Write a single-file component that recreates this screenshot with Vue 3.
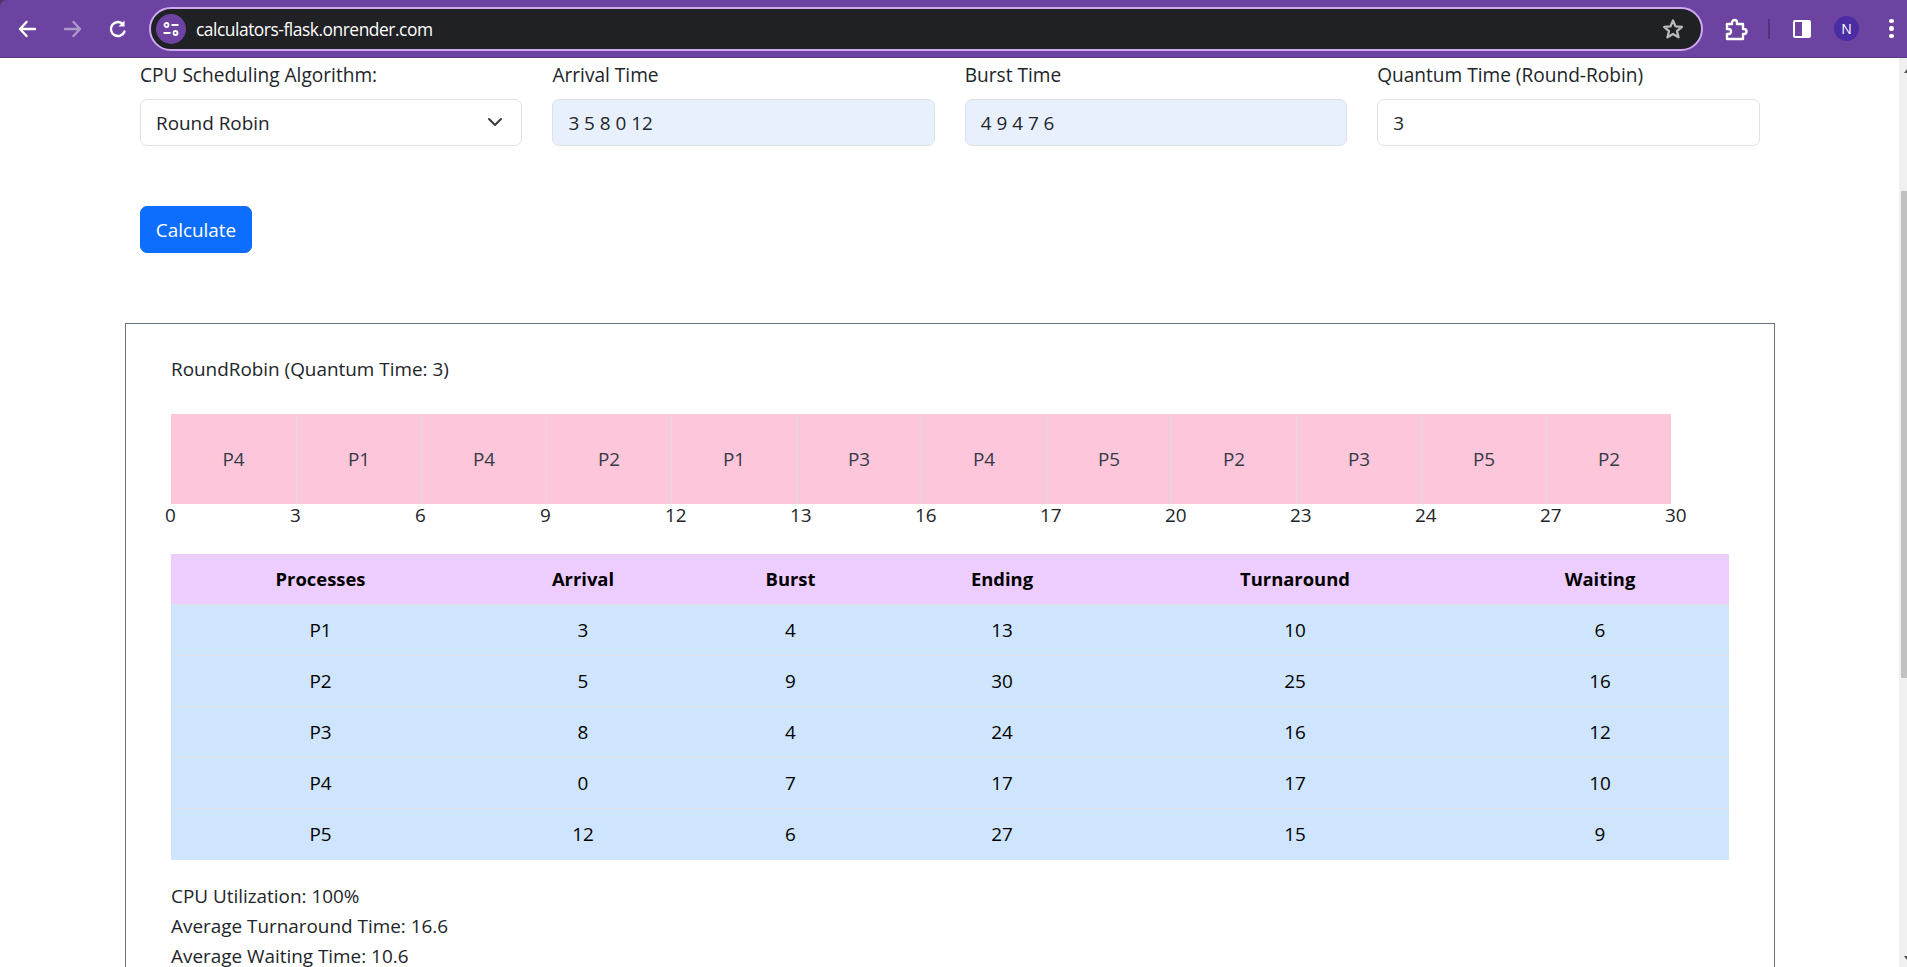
<template>
  <div class="window">
    <header class="toolbar">
      <button class="tool">
        <svg width="24" height="24" viewBox="0 0 24 24"><path d="M19 12H4M10.500 5 4 12l6.500 7" class="ico-line" /></svg>
      </button>
      <button class="tool dim">
        <svg width="24" height="24" viewBox="0 0 24 24"><path d="M4 12h15M12.500 5 19 12l-6.500 7" class="ico-line" /></svg>
      </button>
      <button class="tool">
        <svg width="24" height="24" viewBox="0 0 24 24"><path d="M18.500 14.500A7 7 0 1 1 17 7.200" class="ico-line" /><path d="M18.500 3.500v6h-6z" fill="#fff" /></svg>
      </button>
      <div class="omnibox">
        <span class="site-chip">
          <svg width="20" height="20" viewBox="0 0 20 20" fill="none" stroke="#fff" stroke-width="1.800"><circle cx="5.500" cy="6" r="2" /><path d="M10.500 6h7M2.500 14h7" /><circle cx="14.500" cy="14" r="2" /></svg>
        </span>
        <span class="url">calculators-flask.onrender.com</span>
        <svg class="star" width="24" height="24" viewBox="0 0 24 24"><path d="m12 3.500 2.500 5.900 6.400.5-4.900 4.200 1.500 6.200-5.500-3.300-5.500 3.300 1.500-6.200-4.900-4.200 6.400-.5z" fill="none" stroke="#b9bbbb" stroke-width="2.300" stroke-linejoin="round" /></svg>
      </div>
      <button class="tool puzzle">
        <svg width="26" height="26" viewBox="0 0 26 26"><path d="M5 8h5V6.500a2.500 2.500 0 0 1 5 0V8h6v5h1a2.500 2.500 0 0 1 0 5h-1v5H5v-5h1.500a2.500 2.500 0 0 0 0-5H5z" fill="none" stroke="#fff" stroke-width="2.400" stroke-linejoin="round" /></svg>
      </button>
      <span class="divider"></span>
      <span class="panel-icon"><span></span></span>
      <span class="avatar">N</span>
      <span class="dots"><i></i><i></i><i></i></span>
    </header>

    <div class="viewport">
      <main class="page">
        <form class="calc-form" @submit.prevent>
          <div class="fields">
            <div v-for="f in fields" :key="f.label" class="field">
              <label class="lbl">{{ f.label }}</label>
              <div class="control" :class="{ filled: f.filled, select: f.select }">
                <span>{{ f.value }}</span>
                <svg v-if="f.select" width="16" height="16" viewBox="0 0 16 16" fill="none" stroke="#343a40" stroke-width="2" stroke-linecap="round" stroke-linejoin="round"><path d="m2 5 6 6 6-6" /></svg>
              </div>
            </div>
          </div>
          <button class="calc-btn">Calculate</button>
        </form>

        <section class="result">
          <p class="result-title">RoundRobin (Quantum Time: 3)</p>

          <div class="gantt">
            <div v-for="(p, i) in gantt" :key="i" class="slice">{{ p }}</div>
          </div>
          <div class="ticks">
            <span v-for="t in ticks" :key="t" class="tick">{{ t }}</span>
          </div>

          <table class="stats">
            <thead>
              <tr>
                <th v-for="h in headers" :key="h">{{ h }}</th>
              </tr>
            </thead>
            <tbody>
              <tr v-for="r in rows" :key="r[0]">
                <td v-for="(c, i) in r" :key="i">{{ c }}</td>
              </tr>
            </tbody>
          </table>

          <div class="summary">
            <div>CPU Utilization: 100%</div>
            <div>Average Turnaround Time: 16.6</div>
            <div>Average Waiting Time: 10.6</div>
          </div>
        </section>
      </main>

      <div class="scrollbar">
        <span class="arrow up"></span>
        <span class="thumb"></span>
        <span class="arrow down"></span>
      </div>
    </div>
  </div>
</template>

<script setup>
const fields = [
  { label: 'CPU Scheduling Algorithm:', value: 'Round Robin', select: true },
  { label: 'Arrival Time', value: '3 5 8 0 12', filled: true },
  { label: 'Burst Time', value: '4 9 4 7 6', filled: true },
  { label: 'Quantum Time (Round-Robin)', value: '3' },
]

const gantt = ['P4', 'P1', 'P4', 'P2', 'P1', 'P3', 'P4', 'P5', 'P2', 'P3', 'P5', 'P2']
const ticks = [0, 3, 6, 9, 12, 13, 16, 17, 20, 23, 24, 27, 30]

const headers = ['Processes', 'Arrival', 'Burst', 'Ending', 'Turnaround', 'Waiting']
const rows = [
  ['P1', 3, 4, 13, 10, 6],
  ['P2', 5, 9, 30, 25, 16],
  ['P3', 8, 4, 24, 16, 12],
  ['P4', 0, 7, 17, 17, 10],
  ['P5', 12, 6, 27, 15, 9],
]
</script>

<style>
html, body { margin: 0; height: 100%; overflow: hidden; background: #fff; }
</style>

<style scoped>
.window {
  width: 1907px; height: 967px;
  display: flex; flex-direction: column;
  background: #4b3a63;
  font-family: "Open Sans", "Noto Sans", sans-serif;
  font-size: 18.9px; line-height: 30px; color: #212529;
  overflow: hidden;
}

/* Browser chrome */
.toolbar {
  height: 57px; flex-shrink: 0;
  background: #6c43a0; border-bottom: 1px solid #5c3a8a;
  border-top-left-radius: 7px;
  display: flex; align-items: center;
  padding-left: 10px; padding-right: 0;
  color: #fff;
}
.tool {
  width: 36px; height: 36px; margin-right: 9px;
  background: none; border: none; padding: 0;
  display: flex; align-items: center; justify-content: center;
}
.tool.dim { opacity: 0.45; }
.ico-line { fill: none; stroke: #fff; stroke-width: 2.400; stroke-linecap: round; stroke-linejoin: round; }

.omnibox {
  width: 1554px; height: 44px; box-sizing: border-box;
  margin-left: 4px;
  background: #202124; border: 2px solid #cfa9f2; border-radius: 22px;
  display: flex; align-items: center;
  padding: 0 16px 0 5px;
}
.site-chip {
  width: 30px; height: 30px; border-radius: 50%;
  background: #6c43a0;
  display: flex; align-items: center; justify-content: center;
  flex-shrink: 0;
}
.url {
  margin-left: 10px; flex: 1;
  color: #fff; font-size: 17.400px; letter-spacing: -0.47px;
}
.puzzle { margin: 0 0 0 14px; }
.divider { width: 2px; height: 20px; background: #54317f; margin-left: 15px; }
.panel-icon {
  width: 18px; height: 18px; margin-left: 23px; box-sizing: border-box;
  border: 2px solid #fff; border-radius: 2px;
  display: flex; justify-content: flex-end;
}
.panel-icon span { width: 7px; background: #fff; }
.avatar {
  width: 25px; height: 25px; margin-left: 23px;
  border-radius: 50%; background: #4a2ca5;
  color: #fff; font-size: 14px; line-height: 25px; text-align: center;
}
.dots { margin-left: 30px; display: flex; flex-direction: column; gap: 3px; }
.dots i { width: 4.500px; height: 4.500px; border-radius: 50%; background: #fff; }

/* Page */
.viewport { flex: 1; display: flex; min-height: 0; background: #fff; }
.page { flex: 1; min-width: 0; padding-top: 2px; overflow: hidden; }

.calc-form { padding: 0 139.500px 0 140px; }
.fields { display: grid; grid-template-columns: repeat(4, 1fr); column-gap: 30px; }
.field { display: flex; flex-direction: column; gap: 9px; }
.lbl { display: block; font-size: 19.100px; }
.control {
  height: 47px; box-sizing: border-box;
  padding: 1px 15px 0; border: 1px solid #dee2e6; border-radius: 7px;
  display: flex; align-items: center; justify-content: space-between;
  background: #fff;
}
.control.select { padding-right: 18px; }
.control.select svg { margin-top: -2px; }
.control.filled { background: #e8f0fe; }
.calc-btn {
  display: block; margin-top: 60px;
  width: 112px; height: 47px; padding: 0;
  background: #0d6efd; border: 1px solid #0d6efd; border-radius: 7px;
  color: #fff; font: inherit;
}

.result {
  margin: 70px 0 0 125px; width: 1650px; box-sizing: border-box;
  border: 1px solid #6c757d;
  padding: 30px 45px 40px;
}
.result-title { margin: 0 0 29.500px; }

.gantt { display: flex; }
.slice {
  width: 125px; height: 90px; box-sizing: border-box;
  background: #fec6db; border-left: 1px solid #dedede;
  color: #333a44;
  display: flex; align-items: center; justify-content: center;
}
.slice:first-child { border-left: none; }
.ticks { display: flex; height: 50.500px; }
.tick { flex: 0 0 125px; margin-left: -6px; margin-right: 6px; line-height: 22px; }

.stats { border-collapse: collapse; table-layout: fixed; width: 1558px; text-align: center; color: #000; }
.stats th { height: 50px; padding: 0; background: #edccfe; font-weight: 700; font-size: 18.400px; }
.stats td { height: 51px; box-sizing: border-box; padding: 0; background: #cfe5fd; border-top: 1px solid #dee2e6; }
.stats th:nth-child(1) { width: 299px; }
.stats th:nth-child(2) { width: 226px; }
.stats th:nth-child(3) { width: 189px; }
.stats th:nth-child(4) { width: 234px; }
.stats th:nth-child(5) { width: 352px; }
.stats th:nth-child(6) { width: 258px; }

.summary { margin-top: 21.500px; }

/* Scrollbar */
.scrollbar { width: 8px; flex-shrink: 0; background: #f0f0f0; position: relative; }
.thumb { position: absolute; left: 2px; right: 0; top: 133px; height: 487px; background: #c1c1c1; }
.arrow { position: absolute; left: 5px; width: 0; height: 0; border-left: 3px solid transparent; border-right: 3px solid transparent; }
.arrow.up { top: 11px; border-bottom: 4px solid #505050; }
.arrow.down { bottom: 7px; border-top: 4px solid #505050; }
</style>
